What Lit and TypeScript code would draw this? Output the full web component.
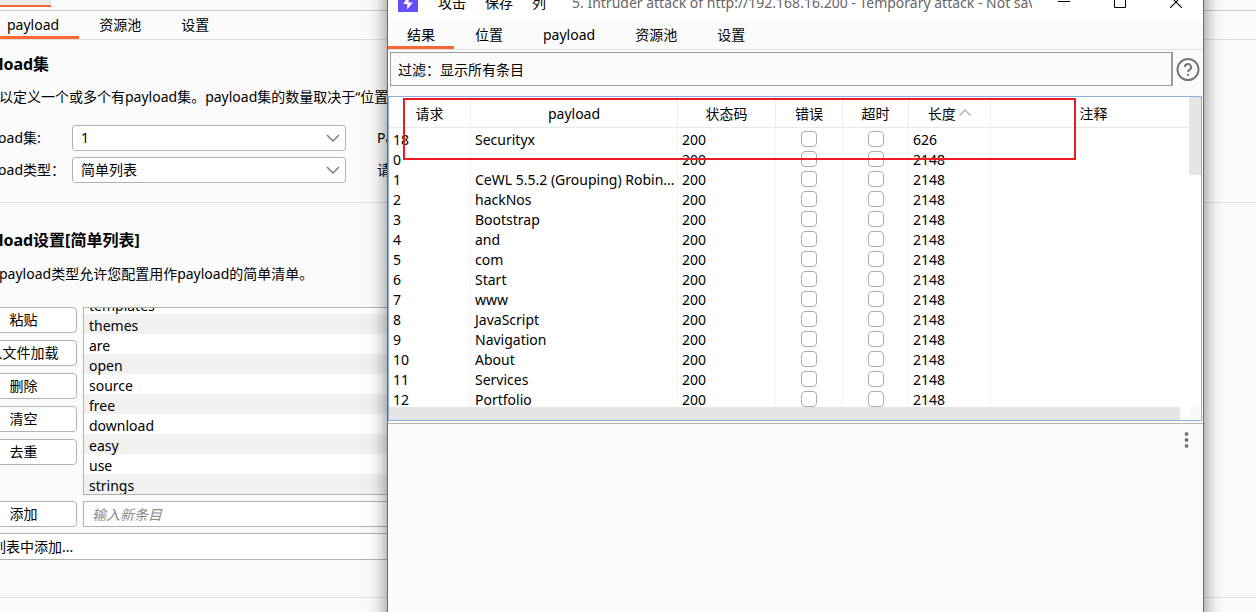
import { LitElement, html, css } from "lit";
import { customElement, state } from "lit/decorators.js";

const base = css`
  :host {
    font: 14px/20px "Noto Sans", "Noto Sans CJK SC", sans-serif;
    color: #000;
  }
  * { box-sizing: border-box; }
  button, input, select { font: inherit; color: inherit; margin: 0; }
`;

const tabStyles = css`
  .tabs {
    display: flex;
    height: 29px;
    border-bottom: 1px solid #dbe1de;
  }
  .tab {
    height: 28px;
    padding: 2px 20px 0;
    border: 0;
    border-bottom: 3px solid transparent;
    background: none;
    white-space: nowrap;
  }
  .tab.active { border-bottom-color: #ff6633; }
`;

@customElement("payload-settings")
class PayloadSettings extends LitElement {
  static styles = [base, tabStyles, css`
    :host { display: block; overflow: hidden; min-height: 100vh; background: #fbfbfb; }
    .strip { height: 11px; border-bottom: 1px solid #c8cacc; }
    .strip-tab { width: 51px; height: 7px; background: #ececec; border-bottom: 2px solid #ff6633; }
    .scrolled { margin-left: -30px; }
    .bg-tabs { padding-left: 17px; }
    section { border-bottom: 1px solid #dcdcdc; }
    .sets { height: 163px; padding-top: 12px; }
    .list { height: 395px; padding: 25px 60px 0 0; }
    h2 { margin: 0; font-size: 16px; line-height: 24px; font-weight: 700; white-space: nowrap; }
    p { margin: 12px 0 0; padding-left: 1px; white-space: nowrap; }
    .sets p { margin-top: 11px; }
    .form {
      display: grid;
      grid-template-columns: 102px 274px 1fr;
      row-gap: 6px;
      align-items: center;
      margin-top: 18px;
      white-space: nowrap;
    }
    .form label { padding-left: 1px; }
    .side { padding-left: 31px; }
    .select { display: grid; }
    .select > * { grid-area: 1 / 1; }
    .select svg { justify-self: end; align-self: center; margin-right: 6px; pointer-events: none; }
    select {
      appearance: none;
      height: 26px;
      padding: 0 8px;
      border: 1px solid #b4b1b3;
      border-radius: 3px;
      background: #fff;
    }
    .editor {
      display: grid;
      grid-template-columns: 107px 1fr;
      gap: 6px;
      margin-top: 23px;
    }
    .buttons { display: flex; flex-direction: column; gap: 7px; }
    .btn {
      height: 26px;
      padding: 0;
      border: 1px solid #b4b1b3;
      border-radius: 4px;
      background: #fff;
    }
    ul {
      display: flex;
      flex-direction: column;
      justify-content: flex-end;
      height: 188px;
      margin: 0;
      padding: 0;
      overflow: hidden;
      list-style: none;
      border: 1px solid #b4b1b3;
      background: #fff;
    }
    li { flex: none; height: 20px; padding-left: 5px; line-height: 24px; }
    li:nth-child(even) { background: #f1f1f1; }
    .entry { height: 26px; padding: 0 8px; border: 1px solid #b4b1b3; background: #fff; }
    .entry::placeholder { color: #8a8a8a; font-style: italic; opacity: 1; }
    .wide {
      width: 100%;
      height: 27px;
      margin-top: 6px;
      padding: 0 7px;
      border: 1px solid #b4b1b3;
      background: #fff;
      text-align: left;
    }
  `];

  private chevron() {
    return html`<svg width="14" height="8" viewBox="0 0 14 8" fill="none" stroke="#777" stroke-width="1.4"><path d="M1 1l6 6 6-6" /></svg>`;
  }

  render() {
    const words = ["templates", "themes", "are", "open", "source", "free", "download", "easy", "use", "strings"];
    return html`
      <div class="strip"><div class="strip-tab"></div></div>
      <div class="scrolled">
        <div class="tabs bg-tabs">
          <button class="tab active">payload</button>
          <button class="tab">资源池</button>
          <button class="tab">设置</button>
        </div>
        <section class="sets">
          <h2>Payload集</h2>
          <p>您可以定义一个或多个有payload集。payload集的数量取决于“位置</p>
          <div class="form">
            <label for="set">Payload集:</label>
            <span class="select"><select id="set"><option>1</option></select>${this.chevron()}</span>
            <span class="side">Pa</span>
            <label for="type">Payload类型：</label>
            <span class="select"><select id="type"><option>简单列表</option></select>${this.chevron()}</span>
            <span class="side">请</span>
          </div>
        </section>
        <section class="list">
          <h2>Payload设置[简单列表]</h2>
          <p>这种payload类型允许您配置用作payload的简单清单。</p>
          <div class="editor">
            <div class="buttons">
              ${["粘贴", "从文件加载", "删除", "清空", "去重"].map((t) => html`<button class="btn">${t}</button>`)}
            </div>
            <ul>${words.map((w) => html`<li>${w}</li>`)}</ul>
            <button class="btn">添加</button>
            <input class="entry" aria-label="输入新条目" placeholder="输入新条目" />
          </div>
          <button class="wide">从列表中添加...</button>
        </section>
      </div>
    `;
  }
}

interface Row { id: number; payload: string; length: number; }

@customElement("attack-window")
class AttackWindow extends LitElement {
  static styles = [base, tabStyles, css`
    :host {
      display: flex;
      flex-direction: column;
      border: 1px solid #6c6c6c;
      background: #fbfbfb;
      box-shadow: 0 4px 18px rgba(0, 0, 0, 0.5);
    }
    .title {
      display: flex;
      align-items: center;
      height: 39px;
      padding-left: 10px;
      background: #fff;
      white-space: nowrap;
    }
    .menu { display: flex; gap: 19px; margin: 2px 0 0 20px; }
    .menu button { padding: 0; border: 0; background: none; }
    .caption { width: 460px; margin: 2px 0 0 26px; overflow: hidden; color: #666; }
    .controls { display: flex; flex: 1; justify-content: space-between; padding: 0 21px 0 26px; }
    .controls button { display: flex; padding: 0; border: 0; background: none; }
    .window-tabs { gap: 2px; }
    .window-tabs .tab { padding: 2px 19px 0; }
    .filter-row { display: flex; align-items: center; gap: 3px; padding: 2px 3px 0 2px; }
    .filter {
      flex: 1;
      height: 34px;
      padding: 2px 7px 0;
      border: 1px solid #999;
      border-right-width: 2px;
      background: #fbfbfb;
      text-align: left;
    }
    .help { display: flex; padding: 0; border: 0; background: none; }
    .results {
      display: grid;
      grid-template-columns: 1fr 12px;
      grid-template-rows: 310px 13px;
      height: 325px;
      margin: 10px 1px 0 0;
      overflow: hidden;
      border: 1px solid #8ab2dc;
      background: #fff;
    }
    .view { overflow: hidden; }
    table { width: 100%; table-layout: fixed; border-collapse: separate; border-spacing: 0; }
    th { height: 31px; padding: 3px 0 0; font-weight: 400; border-bottom: 1px solid #e8e8e8; border-right: 1px solid #ececec; }
    td { height: 20px; padding: 3px 0 0 4px; line-height: 17px; white-space: nowrap; border-right: 1px solid #f3f3f3; }
    th:last-child, td:last-child { border-right: 0; }
    th:last-child { padding-left: 7px; }
    .c-id { width: 82px; }
    .c-payload { width: 207px; }
    .c-status { width: 98px; }
    .c-error { width: 67px; }
    .c-timeout { width: 66px; }
    .c-length { width: 82px; }
    .check { padding: 1px 0 0; text-align: center; }
    .check input {
      appearance: none;
      display: block;
      width: 16px;
      height: 16px;
      margin: 0 auto;
      border: 1px solid #adadad;
      border-radius: 4px;
      background: #fff;
    }
    .vthumb { height: 78px; background: #e5e5e5; }
    .hthumb { margin-right: 9px; background: #e5e5e5; }
    .corner { background: #f9f9f9; }
    .detail {
      display: flex;
      justify-content: flex-end;
      align-items: flex-start;
      flex: 1;
      margin-top: 2px;
      padding: 7px 14px;
      border-top: 1px solid #b5b5b5;
    }
    .dots { display: flex; padding: 0; border: 0; background: none; }
    .mark {
      position: absolute;
      top: 116px;
      left: 15px;
      right: 127px;
      height: 62px;
      border: 2px solid #ed1c24;
      pointer-events: none;
    }
  `];

  @state() private rows: Row[] = [
    { id: 18, payload: "Securityx", length: 626 },
    ...["", "CeWL 5.5.2 (Grouping) Robin...", "hackNos", "Bootstrap", "and", "com", "Start", "www",
      "JavaScript", "Navigation", "About", "Services", "Portfolio"]
      .map((payload, id) => ({ id, payload, length: 2148 })),
  ];

  render() {
    return html`
      <div class="title">
        <svg width="20" height="20" viewBox="0 0 20 20"><rect width="20" height="20" fill="#6450ff" /><path d="M10.6 3v7.6h4.2L9.2 17.6V12H5.4z" fill="#fff" /></svg>
        <div class="menu"><button>攻击</button><button>保存</button><button>列</button></div>
        <div class="caption">5. Intruder attack of http://192.168.16.200 - Temporary attack - Not saved</div>
        <div class="controls">
          <button aria-label="最小化"><svg width="12" height="12"><path d="M0 5.5h12" stroke="#000" /></svg></button>
          <button aria-label="最大化"><svg width="12" height="12"><path d="M.5.5h11v11H.5z" fill="none" stroke="#000" /></svg></button>
          <button aria-label="关闭"><svg width="12" height="12"><path d="M0 0l12 12M12 0L0 12" stroke="#000" stroke-width="1.1" /></svg></button>
        </div>
      </div>
      <div class="tabs window-tabs">
        ${["结果", "位置", "payload", "资源池", "设置"].map((t, i) => html`<button class="tab ${i === 0 ? "active" : ""}">${t}</button>`)}
      </div>
      <div class="filter-row">
        <button class="filter">过滤：显示所有条目</button>
        <button class="help" aria-label="帮助">
          <svg width="24" height="24" viewBox="0 0 24 24" fill="none" stroke="#777" stroke-width="2">
            <circle cx="12" cy="12.5" r="10.5" />
            <path d="M8.9 10.1a3.1 3.1 0 1 1 4.6 2.7c-1 .6-1.5 1-1.5 2.2" />
            <path d="M12 16.7v2" />
          </svg>
        </button>
      </div>
      <div class="results">
        <div class="view">
          <table>
            <thead>
              <tr>
                <th class="c-id">请求</th><th class="c-payload">payload</th><th class="c-status">状态码</th>
                <th class="c-error">错误</th><th class="c-timeout">超时</th>
                <th class="c-length">长度 <svg width="12" height="10" viewBox="0 0 12 10" fill="none" stroke="#aaa" stroke-width="1.2"><path d="M.5 6.5L6 1l5.5 5.5" /></svg></th>
                <th>注释</th>
              </tr>
            </thead>
            <tbody>
              ${this.rows.map((r) => html`<tr>
                <td>${r.id}</td><td>${r.payload}</td><td>200</td>
                <td class="check"><input type="checkbox" aria-label="错误" /></td>
                <td class="check"><input type="checkbox" aria-label="超时" /></td>
                <td>${r.length}</td><td></td>
              </tr>`)}
            </tbody>
          </table>
        </div>
        <div class="vthumb"></div>
        <div class="hthumb"></div>
        <div class="corner"></div>
      </div>
      <div class="detail">
        <button class="dots" aria-label="更多"><svg width="5" height="18" fill="#777"><circle cx="2.5" cy="3" r="1.9" /><circle cx="2.5" cy="9" r="1.9" /><circle cx="2.5" cy="15" r="1.9" /></svg></button>
      </div>
      <div class="mark"></div>
    `;
  }
}

@customElement("app-root")
class AppRoot extends LitElement {
  static styles = css`
    :host { display: block; position: relative; height: 100vh; overflow: hidden; }
    attack-window { position: absolute; top: -19px; bottom: -20px; left: 387px; right: 52px; }
  `;

  render() {
    return html`<payload-settings></payload-settings><attack-window></attack-window>`;
  }
}
